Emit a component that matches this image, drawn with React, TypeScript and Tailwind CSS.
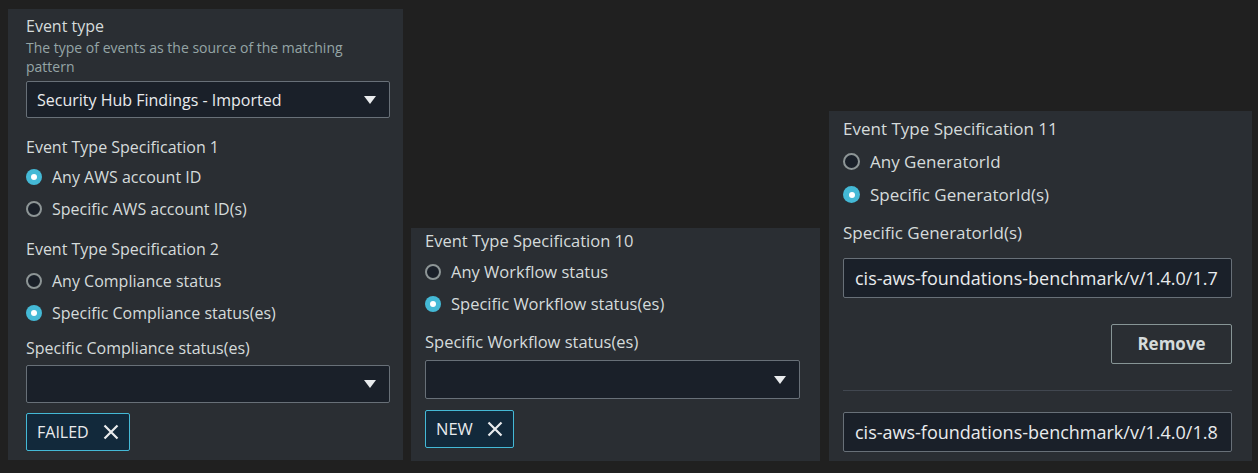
import React from 'react'

const font = { fontFamily: '"Open Sans", "Noto Sans", sans-serif' }

const Caret = () => (
  <svg width="12" height="8" viewBox="0 0 12 8" className="shrink-0">
    <path d="M0 0 H12 L6 8 Z" fill="#e9ebed" />
  </svg>
)

const Close = () => (
  <svg width="16" height="16" viewBox="0 0 16 16" className="shrink-0">
    <path d="M1.5 1.5 L14.5 14.5 M14.5 1.5 L1.5 14.5" stroke="#e9ebed" strokeWidth="2.2" fill="none" />
  </svg>
)

const Radio: React.FC<{ checked?: boolean; label: string; big?: boolean }> = ({ checked, label, big }) => (
  <div className={`flex items-center gap-[10px] ${big ? 'h-[33px]' : 'h-8'}`}>
    {checked ? (
      <span className={`rounded-full bg-[#44b9d6] flex items-center justify-center shrink-0 ${big ? 'w-[17px] h-[17px]' : 'w-4 h-4'}`}>
        <span className="w-[6px] h-[6px] rounded-full bg-white" />
      </span>
    ) : (
      <span className={`rounded-full border-2 border-[#8d9596] bg-[#1a2029] shrink-0 ${big ? 'w-[17px] h-[17px]' : 'w-4 h-4'}`} />
    )}
    <span className="text-[#d5dbdb]">{label}</span>
  </div>
)

const Label: React.FC<{ children: React.ReactNode; className?: string }> = ({ children, className }) => (
  <div className={`leading-[22px] text-[#d5dbdb] ${className ?? ''}`}>{children}</div>
)

const Select: React.FC<{ value?: string; className?: string }> = ({ value, className }) => (
  <div className={`flex items-center justify-between border border-[#687078] bg-[#1a2029] rounded-[2px] pl-[10px] pr-[13px] ${className ?? ''}`}>
    <span className="text-[#e9ebed]">{value}</span>
    <Caret />
  </div>
)

const Token: React.FC<{ label: string; className?: string }> = ({ label, className }) => (
  <div className={`inline-flex items-center gap-[14px] h-[38px] pl-[10px] pr-[10px] bg-[#12293b] border border-[#44b9d6] rounded-[2px] ${className ?? ''}`}>
    <span className="text-[#e9ebed]">{label}</span>
    <Close />
  </div>
)

const Input: React.FC<{ value: string; className?: string }> = ({ value, className }) => (
  <div className={`flex items-center h-[40px] border border-[#687078] bg-[#1a2029] rounded-[2px] px-[11px] ${className ?? ''}`}>
    <span className="text-[18px] text-[#e9ebed] whitespace-nowrap">{value}</span>
  </div>
)

export default function App() {
  return (
    <div className="w-[1258px] h-[473px] bg-[#202020] flex items-start pl-[8px]" style={font}>
      {/* left */}
      <div className="mt-[9px] w-[395px] h-[451px] bg-[#2a2e33] pl-[18px] pr-[13px] pt-[6px] flex flex-col text-[16px]">
        <Label>Event type</Label>
        <div className="text-[14px] leading-[19px] text-[#95a5a6] mt-[1px] pr-[30px]">
          The type of events as the source of the matching pattern
        </div>
        <Select value="Security Hub Findings - Imported" className="h-[37px] mt-[5px]" />
        <Label className="mt-[18px]">Event Type Specification 1</Label>
        <div className="mt-[3px]">
          <Radio checked label="Any AWS account ID" />
          <Radio label="Specific AWS account ID(s)" />
        </div>
        <Label className="mt-[13px]">Event Type Specification 2</Label>
        <div className="mt-[5px]">
          <Radio label="Any Compliance status" />
          <Radio checked label="Specific Compliance status(es)" />
        </div>
        <Label className="mt-[8px]">Specific Compliance status(es)</Label>
        <Select className="h-[38px] mt-[6px]" />
        <div className="mt-[10px]">
          <Token label="FAILED" />
        </div>
      </div>

      {/* middle */}
      <div className="mt-[228px] ml-[8px] w-[409px] h-[233px] bg-[#2a2e33] pl-[14px] pr-[20px] pt-[2px] flex flex-col text-[16.5px]">
        <Label>Event Type Specification 10</Label>
        <div className="mt-[4px]">
          <Radio label="Any Workflow status" />
          <Radio checked label="Specific Workflow status(es)" />
        </div>
        <Label className="mt-[11px]">Specific Workflow status(es)</Label>
        <Select className="h-[39px] mt-[7px]" />
        <div className="mt-[11px]">
          <Token label="NEW" />
        </div>
      </div>

      {/* right */}
      <div className="mt-[111px] ml-[9px] w-[423px] h-[350px] bg-[#2a2e33] pl-[14px] pr-[20px] pt-[7px] flex flex-col text-[17px]">
        <Label>Event Type Specification 11</Label>
        <div className="mt-[5px]">
          <Radio big label="Any GeneratorId" />
          <Radio big checked label="Specific GeneratorId(s)" />
        </div>
        <Label className="mt-[11px]">Specific GeneratorId(s)</Label>
        <Input value="cis-aws-foundations-benchmark/v/1.4.0/1.7" className="mt-[14px]" />
        <div className="flex justify-end mt-[26px]">
          <button className="h-[40px] w-[121px] border border-[#879596] rounded-[2px] text-[17px] font-bold text-[#d5dbdb] bg-transparent">
            Remove
          </button>
        </div>
        <div className="h-px bg-[#414750] mt-[26px]" />
        <Input value="cis-aws-foundations-benchmark/v/1.4.0/1.8" className="mt-[21px]" />
      </div>
    </div>
  )
}
